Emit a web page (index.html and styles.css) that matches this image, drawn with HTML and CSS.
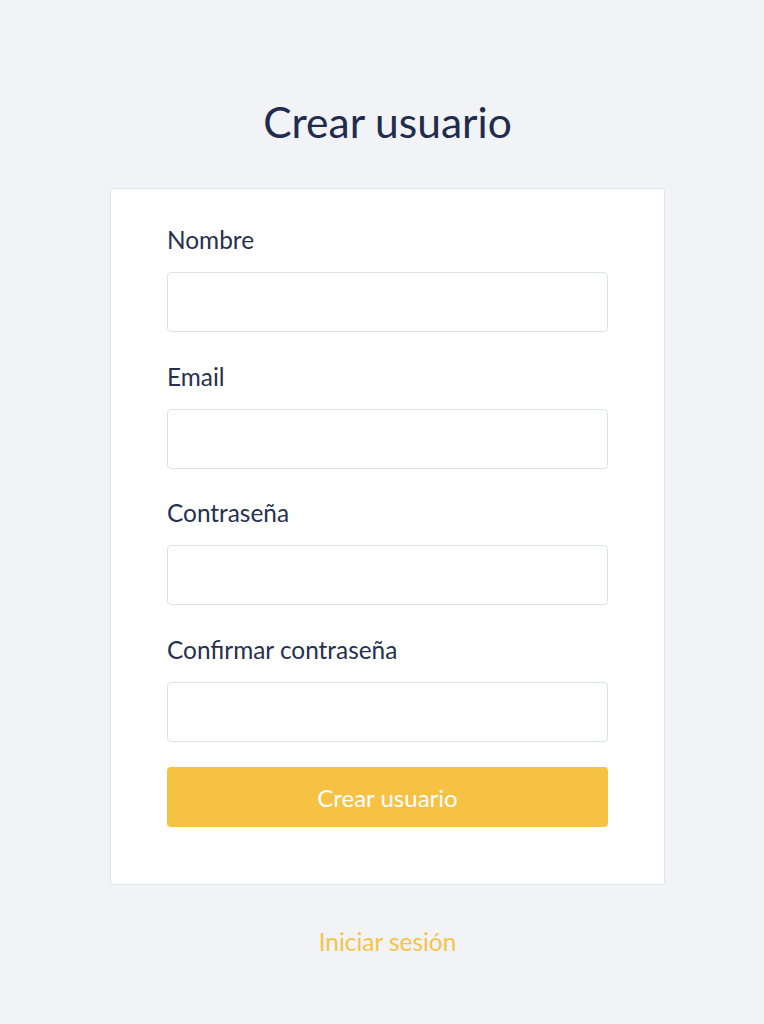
FILE: index.html
```html
<!DOCTYPE html>
<html lang="es">
<head>
<meta charset="utf-8">
<title>Crear usuario</title>
<link rel="stylesheet" href="styles.css">
</head>
<body>
<main class="page">
  <h1 class="title">Crear usuario</h1>
  <form class="card">
    <div class="field">
      <label class="label" for="nombre">Nombre</label>
      <input class="input" id="nombre" type="text">
    </div>
    <div class="field">
      <label class="label" for="email">Email</label>
      <input class="input" id="email" type="email">
    </div>
    <div class="field">
      <label class="label" for="pass">Contraseña</label>
      <input class="input" id="pass" type="password">
    </div>
    <div class="field">
      <label class="label" for="pass2">Confirmar contraseña</label>
      <input class="input" id="pass2" type="password">
    </div>
    <button class="button" type="button">Crear usuario</button>
  </form>
  <a class="link" href="#">Iniciar sesión</a>
</main>
</body>
</html>
```
FILE: styles.css
```css
* { box-sizing: border-box; }
html, body { margin: 0; padding: 0; }
body {
  background: #f1f3f7;
  font-family: Lato, "Open Sans", sans-serif;
  color: #26304f;
  padding-left: 11px;
}
.page {
  display: flex;
  flex-direction: column;
  align-items: center;
  padding-top: 98px;
}
.title {
  margin: 0 0 42px;
  font-size: 42.5px;
  line-height: 48px;
  font-weight: 400;
  color: #1f2c4e;
}
.card {
  width: 555px;
  background: #fff;
  border: 1px solid #e1e4eb;
  border-radius: 3px;
  padding: 35px 56px 57px;
  display: flex;
  flex-direction: column;
  gap: 28.5px;
}
.field {
  display: flex;
  flex-direction: column;
  gap: 16px;
}
.label {
  font-size: 24.4px;
  line-height: 32px;
  color: #26304f;
}
.input {
  height: 60px;
  border: 1px solid #dfe2ea;
  border-radius: 4px;
  background: #fff;
  font: inherit;
  width: 100%;
}
.button {
  margin-top: -3px;
  height: 60px;
  border: none;
  border-radius: 4px;
  background: #f5c244;
  color: #fff;
  font-family: inherit;
  font-size: 24px;
}
.link {
  margin-top: 42px;
  font-size: 24.4px;
  line-height: 30px;
  color: #f5c448;
  text-decoration: none;
}
```
